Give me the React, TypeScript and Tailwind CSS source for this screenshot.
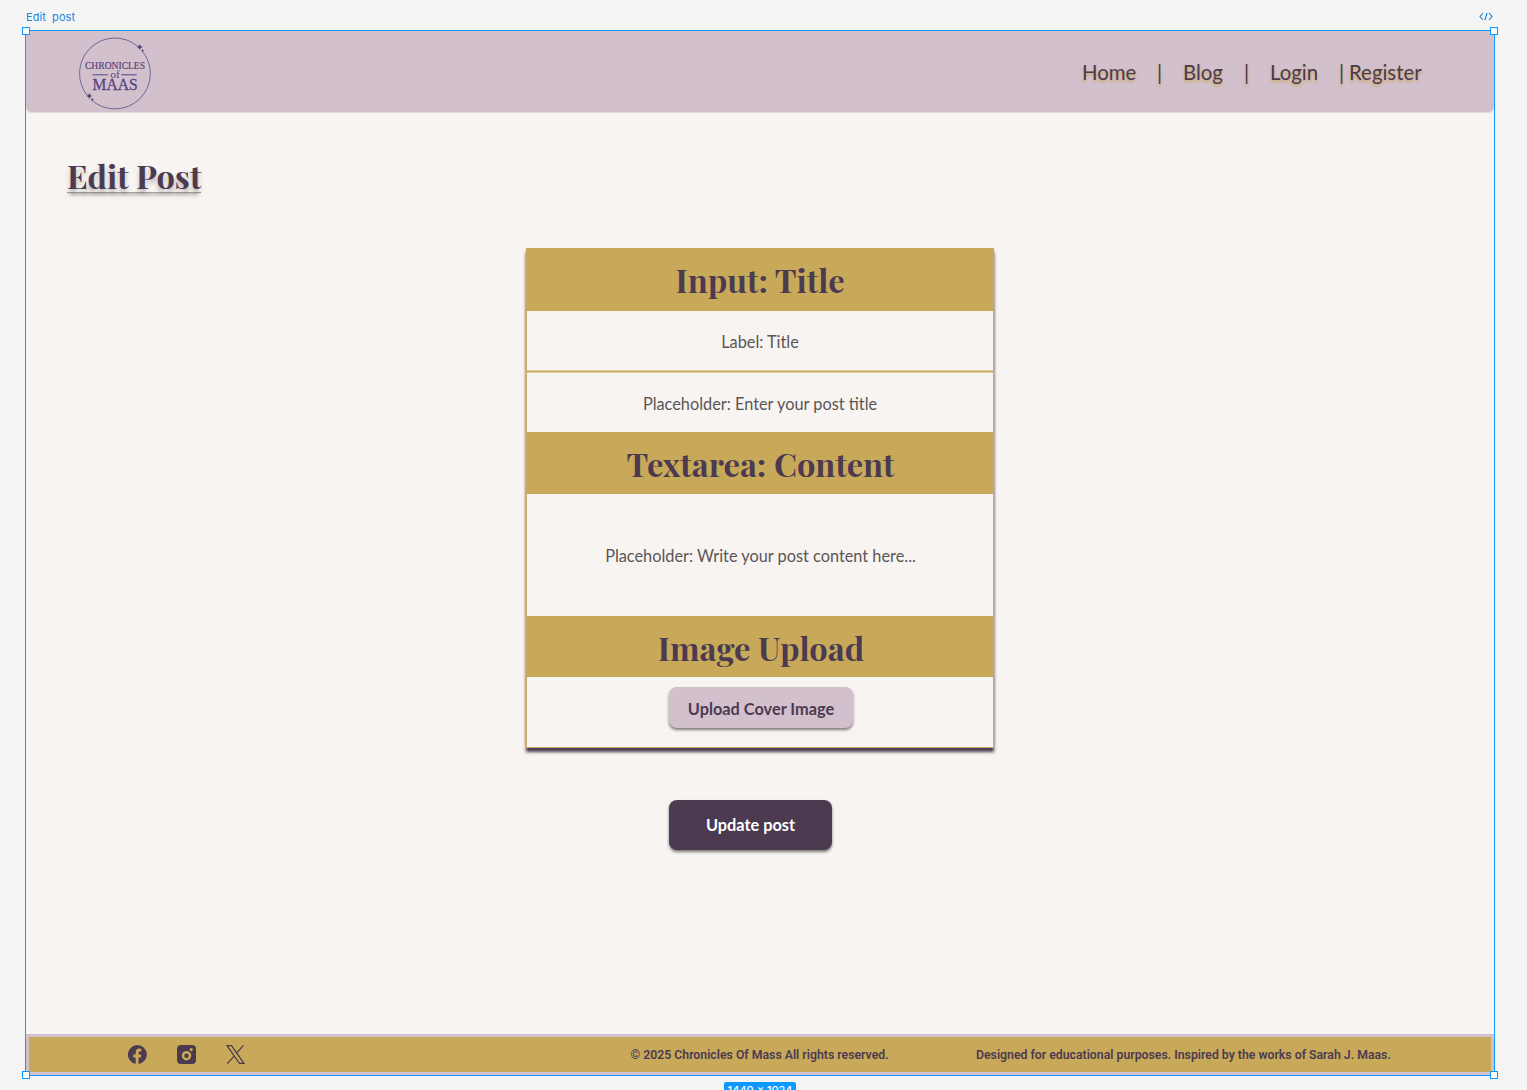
import React from "react";

const NAV_TEXT = "[text-shadow:0_2px_3px_#c8a959]";

function Handle({ className }: { className: string }) {
  return <span className={`absolute z-20 size-2 border border-[#0d99ff] bg-white ${className}`} />;
}

function Sparkle({ x, y, r }: { x: number; y: number; r: number }) {
  return (
    <path
      transform={`translate(${x} ${y}) scale(${r})`}
      d="M0-1Q.2-.2 1 0Q.2.2 0 1Q-.2.2-1 0Q-.2-.2 0-1Z"
      fill="#54457f"
    />
  );
}

function Logo() {
  return (
    <svg width="74" height="74" viewBox="0 0 74 74" className="block" fontFamily="'Liberation Serif', serif" fill="#54457f">
      <path d="M60.7 10.3A35.4 35.4 0 0 0 10.6 59.9M13.8 63.4A35.4 35.4 0 0 0 64.5 14.1" fill="none" stroke="#6a5a90" strokeWidth="0.9" />
      <Sparkle x={62.7} y={11} r={3} />
      <Sparkle x={65.8} y={14.6} r={1.5} />
      <Sparkle x={12.3} y={60} r={3} />
      <Sparkle x={15.4} y={63.4} r={1.5} />
      <text x="8" y="32.7" fontSize="11" textLength="60" lengthAdjust="spacingAndGlyphs" stroke="#54457f" strokeWidth="0.2">CHRONICLES</text>
      <path d="M15.5 38.8H31M44.2 38.8H59.7" stroke="#54457f" strokeWidth="1" />
      <text x="33.2" y="41.7" fontSize="11" textLength="9.6" lengthAdjust="spacingAndGlyphs">of</text>
      <text x="15.6" y="54.4" fontSize="17.5" textLength="45" lengthAdjust="spacingAndGlyphs" stroke="#54457f" strokeWidth="0.3">MAAS</text>
    </svg>
  );
}

function SectionTitle({ children, className }: { children: React.ReactNode; className: string }) {
  return (
    <h2 className={`flex items-center justify-center whitespace-nowrap bg-[#c8a959] font-['Playfair_Display','Liberation_Serif',serif] text-[32.64px] leading-none font-bold text-[#4c3a51] ${className}`}>
      {children}
    </h2>
  );
}

export default function App() {
  return (
    <div className="h-[1090px] w-[1527px] overflow-hidden bg-[#f5f5f5] font-['Lato',sans-serif]">
      <div className="flex h-[30px] items-center justify-between pr-[34px] pl-[26px] pt-[3px] text-[#2186d8]">
        <span className="font-['Inter',sans-serif] text-[11px] leading-4 tracking-[0.05px] whitespace-pre">Edit  post</span>
        <svg width="14" height="9" viewBox="0 0 14 9" fill="none" stroke="#0d7fdb" strokeWidth="1.1">
          <path d="M4 1L1 4.5L4 8M10 1l3 3.5L10 8M8 1L6 8" />
        </svg>
      </div>

      <div className="relative ml-[25px] flex h-[1046px] w-[1470px] flex-col border border-[#0d99ff] bg-[#f8f4f1]">
        <Handle className="-top-[4px] -left-[4px]" />
        <Handle className="-top-[4px] -right-[4px]" />
        <Handle className="-bottom-[4px] -left-[4px]" />
        <Handle className="-right-[4px] -bottom-[4px]" />

        <header className="flex h-[82px] shrink-0 items-start justify-between rounded-b-[6px] border-b border-[#e3d7de] bg-[#d2c0cd] pl-[52px]">
          <div className="-ml-px pt-[5px]"><Logo /></div>
          <nav className={`flex w-[412px] pt-[29px] text-[20.4px] leading-[25px] text-[#4c3a51] ${NAV_TEXT}`}>
            <a className="w-[74px]">Home</a>
            <span className="w-[27px] pl-px">|</span>
            <a className="w-[60px]">Blog</a>
            <span className="w-[27px] pl-px">|</span>
            <a className="w-[68px]">Login</a>
            <span className="w-[11px] pl-px">|</span>
            <a>Register</a>
          </nav>
        </header>

        <h1 className="mt-[44px] ml-[41px] h-[36px] self-start border-b border-[#a79da5] font-['Playfair_Display','Liberation_Serif',serif] text-[32.64px] leading-[37px] font-bold tracking-[-0.03px] whitespace-nowrap text-[#4c3a51] shadow-[0_5px_4px_-3px_rgba(0,0,0,0.25)] [text-shadow:0_4px_4px_rgba(0,0,0,0.25)]">
          Edit Post
        </h1>

        <section className="mt-[55px] ml-[500px] flex h-[500px] w-[468px] flex-col border border-t-0 border-[#c8a959] text-[16.32px] text-[#5b5656] shadow-[0_4px_3px_#4c3a51]">
          <SectionTitle className="h-[63px] pt-[2px]">Input: Title</SectionTitle>
          <p className="flex h-[59px] items-center justify-center pt-[4px]">Label: Title</p>
          <div className="h-[3px] border-y border-[#e0cfa3] bg-[#c8a959]" />
          <p className="flex h-[59px] items-center justify-center pt-[4px]">Placeholder: Enter your post title</p>
          <SectionTitle className="h-[62px] pt-[2px] pl-px">Textarea: Content</SectionTitle>
          <p className="flex h-[122px] items-center justify-center pt-[2px] pl-px">Placeholder: Write your post content here...</p>
          <SectionTitle className="h-[61px] pt-[4px] pl-[2px]">Image Upload</SectionTitle>
          <div className="flex justify-center pt-[10px] pl-[2px]">
            <button className="h-[41px] w-[184px] rounded-[8px] bg-[#d2c0cd] pt-[3px] text-[16.32px] font-bold text-[#4c3a51] shadow-[0_2px_3px_rgba(0,0,0,0.5)]">Upload Cover Image</button>
          </div>
        </section>

        <button className="mt-[52px] ml-[643px] h-[50px] w-[163px] rounded-[8px] bg-[#4c3a51] pt-px text-[16.32px] font-bold text-white shadow-[0_2px_3px_rgba(0,0,0,0.5)]">
          Update post
        </button>

        <footer className="mt-auto flex h-[41px] shrink-0 items-center border-3 border-[#d2c0cd] bg-[#c8a959] font-['Roboto',sans-serif] text-[12.27px] font-semibold whitespace-nowrap text-[#4c3a51]">
          <div className="flex w-[601.5px] gap-[30px] pl-[99px]">
            <svg width="19" height="19" viewBox="0 0 24 24" fill="#4c3a51">
              <path d="M12 0a12 12 0 0 0-2.3 23.8V15.7H6.6V12h3.1V9.6c0-3.5 1.7-5.1 4.7-5.1.9 0 1.8.1 2.4.2v3.4h-1.7c-1.4 0-1.8.7-1.8 2V12h3.4l-.5 3.7h-2.9v8.2A12 12 0 0 0 12 0z" />
            </svg>
            <svg width="19" height="19" viewBox="0 0 24 24" fill="#4c3a51">
              <path fillRule="evenodd" d="M5 0h14a5 5 0 0 1 5 5v14a5 5 0 0 1-5 5H5a5 5 0 0 1-5-5V5a5 5 0 0 1 5-5zM12 7.5a6 6 0 1 0 0 12 6 6 0 0 0 0-12zm0 3.2a2.8 2.8 0 1 1 0 5.6 2.8 2.8 0 0 1 0-5.6zM18 3.8a2 2 0 1 0 0 4 2 2 0 0 0 0-4z" />
            </svg>
            <svg width="19" height="19" viewBox="0 0 24 24" fill="none" stroke="#4c3a51" strokeWidth="1.5">
              <path d="M1.3 .8H7L22.7 23.2H17ZM22 .4L13.4 10.2M10.5 13.7L1.5 23.6" />
            </svg>
          </div>
          <p className="w-[345.5px] pt-px">© 2025 Chronicles Of Mass All rights reserved.</p>
          <p className="pt-px">Designed for educational purposes. Inspired by the works of Sarah J. Maas.</p>
        </footer>

        <div className="absolute top-[1051px] left-[698px] h-5 w-[72px] rounded-[2px] bg-[#0d99ff] text-center font-['Inter',sans-serif] text-[11px] leading-4 font-medium text-white">
          1440 × 1024
        </div>
      </div>
    </div>
  );
}
